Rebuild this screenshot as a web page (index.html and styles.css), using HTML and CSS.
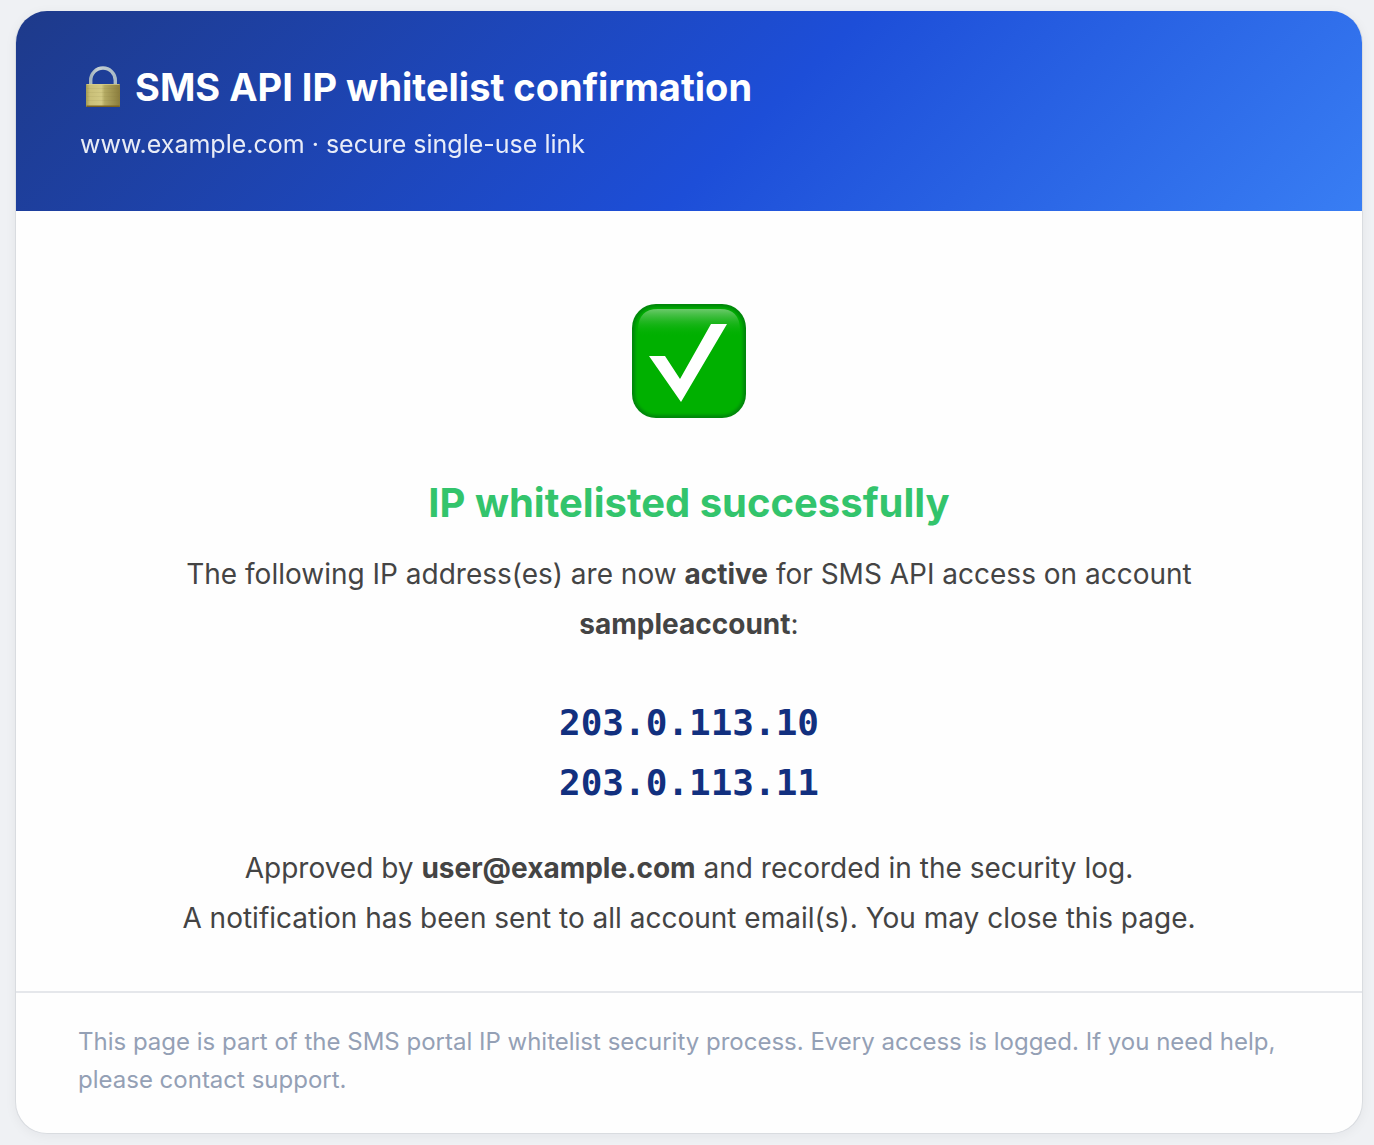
FILE: index.html
```html
<!DOCTYPE html>
<html lang="en">
<head>
<meta charset="utf-8">
<meta name="viewport" content="width=device-width, initial-scale=1">
<title>SMS API IP whitelist confirmation</title>
<link rel="stylesheet" href="styles.css">
</head>
<body>
<main class="card">
  <header class="card-header">
    <h1 class="title">
      <svg class="lock" viewBox="0 0 36 42" aria-hidden="true">
        <defs>
          <linearGradient id="brass" x1="0" x2="1" y1="0" y2="0">
            <stop offset="0" stop-color="#a39a52"/><stop offset=".12" stop-color="#c9bf78"/><stop offset=".45" stop-color="#d2c983"/><stop offset=".55" stop-color="#b3a962"/><stop offset="1" stop-color="#8a7c3c"/>
          </linearGradient>
          <linearGradient id="steel" x1="0" x2="1" y1="0" y2="0">
            <stop offset="0" stop-color="#a3b3bc"/><stop offset=".3" stop-color="#c6d0d2"/><stop offset="1" stop-color="#a9bac6"/>
          </linearGradient>
        </defs>
        <path d="M5.700 19V14.300A12.300 12.300 0 0 1 30.300 14.300V19" fill="none" stroke="url(#steel)" stroke-width="3.400"/>
        <rect x="1" y="18" width="34" height="23" rx="1" fill="url(#brass)"/>
        <path d="M1.500 18.500H34.500" stroke="#d8d08f" stroke-opacity=".7"/>
        <path d="M2 22.500H34M2 26.500H34M2 30.500H34M2 34.500H34" stroke="#7f7436" stroke-opacity=".1"/>
        <path d="M1.500 40.200H34.500" stroke="#7a6221" stroke-width="1.600"/>
      </svg>
      <span>SMS API IP whitelist confirmation</span>
    </h1>
    <p class="subtitle">www.example.com · secure single-use link</p>
  </header>
  <section class="content">
    <svg class="check" viewBox="0 0 116 116" role="img" aria-label="Success">
      <defs>
        <linearGradient id="gloss" x1="0" x2="0" y1="0" y2="1">
          <stop offset="0" stop-color="#6bc96b"/><stop offset=".45" stop-color="#2cb82c" stop-opacity=".75"/><stop offset="1" stop-color="#00b000" stop-opacity="0"/>
        </linearGradient>
        <filter id="soften" x="-10%" y="-10%" width="120%" height="120%"><feGaussianBlur stdDeviation="1.500"/></filter>
      </defs>
      <rect x="1" y="1" width="114" height="114" rx="24" fill="#00860a"/>
      <rect x="4" y="4" width="108" height="108" rx="21" fill="#00b000" filter="url(#soften)"/>
      <path d="M7 34V27Q7 6 27 6H89Q109 6 109 27V34Z" fill="url(#gloss)"/>
      <path d="M18 53H34L49 76L80 21H96L50 99Z" fill="#fff"/>
    </svg>
    <h2 class="result">IP whitelisted successfully</h2>
    <p class="message">The following IP address(es) are now <strong>active</strong> for SMS API access on account <strong>sampleaccount</strong>:</p>
    <ul class="addresses">
      <li>203.0.113.10</li>
      <li>203.0.113.11</li>
    </ul>
    <p class="message">Approved by <strong>user@example.com</strong> and recorded in the security log.<br>A notification has been sent to all account email(s). You may close this page.</p>
  </section>
  <footer class="card-footer">This page is part of the SMS portal IP whitelist security process. Every access is logged. If you need help, please contact support.</footer>
</main>
</body>
</html>
```
FILE: styles.css
```css
* { box-sizing: border-box; }
body { margin: 0; padding: 11px 11px 11px 15px; background: #eff1f4; font-family: Inter, "Liberation Sans", sans-serif; }
h1, h2, p, ul { margin: 0; padding: 0; }
.card { border: 1px solid #d9dce0; border-top-width: 0; border-radius: 32px; background: #fefefe; overflow: hidden; box-shadow: 0 2px 12px rgba(15, 23, 42, .05); }
.card-header { padding: 48px 64px; background: linear-gradient(135deg, #1e3a8a 0%, #1d4ed8 55%, #3b82f6 104%); color: #fff; }
.title { display: flex; align-items: center; gap: 14px; padding-left: 5px; font-size: 38px; line-height: 56px; font-weight: 700; }
.lock { width: 36px; height: 42px; flex: none; }
.subtitle { font-size: 25px; line-height: 40px; margin-top: 9px; margin-bottom: -1px; opacity: .9; }
.content { padding: 92px 64px 48px; text-align: center; color: #444; }
.check { display: block; width: 116px; height: 116px; margin: 0 auto 56px; }
.result { margin-bottom: 18px; color: #33c46c; font-size: 40px; line-height: 56px; font-weight: 700; }
.message { font-size: 28px; line-height: 50px; }
.addresses { list-style: none; margin: 44px 0 30px; color: #12307f; font: 700 36px/60px "DejaVu Sans Mono", monospace; }
.card-footer { padding: 30px 62px 34px; border-top: 2px solid #e5e7eb; color: #94a0b5; font-size: 24px; line-height: 38px; }
```
